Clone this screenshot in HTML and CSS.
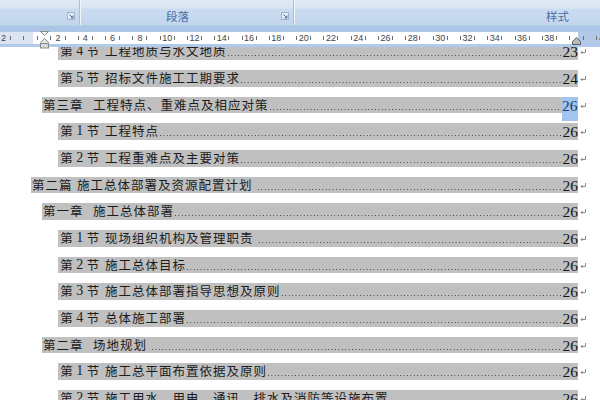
FILE: index.html
```html
<!DOCTYPE html>
<html lang="zh-CN">
<head>
<meta charset="utf-8">
<title>目录</title>
<link rel="stylesheet" href="styles.css">
</head>
<body>
<div class="app">
  <div class="ribbon">
    <div class="group g1">
      <div class="gtop"></div>
      <div class="glabel">
        <span class="launch"><svg width="8" height="8" viewBox="0 0 8 8"><rect x="0.5" y="0.5" width="7" height="7" fill="#e6eef8" stroke="#9fb2cc"/><path d="M2.5 2.5L6 6M6 3.5V6H3.5" fill="none" stroke="#56698a"/></svg></span>
      </div>
    </div>
    <div class="sep"></div>
    <div class="group g2">
      <div class="gtop"></div>
      <div class="glabel">
        <span class="lt">段落</span>
        <span class="launch"><svg width="8" height="8" viewBox="0 0 8 8"><rect x="0.5" y="0.5" width="7" height="7" fill="#e6eef8" stroke="#9fb2cc"/><path d="M2.5 2.5L6 6M6 3.5V6H3.5" fill="none" stroke="#56698a"/></svg></span>
      </div>
    </div>
    <div class="sep"></div>
    <div class="group g3">
      <div class="gtop"></div>
      <div class="glabel"><span class="lt">样式</span></div>
    </div>
  </div>
  <div class="edge"></div>
  <div class="strip"></div>
  <div class="ruler">
    <div class="scale">
      <div class="cell"><i></i><b>2</b><i></i></div>
      <div class="cell"><i></i><b></b><i></i></div>
      <div class="cell"><i></i><b>2</b><i></i></div>
      <div class="cell"><i></i><b>4</b><i></i></div>
      <div class="cell"><i></i><b>6</b><i></i></div>
      <div class="cell"><i></i><b>8</b><i></i></div>
      <div class="cell"><i></i><b>10</b><i></i></div>
      <div class="cell"><i></i><b>12</b><i></i></div>
      <div class="cell"><i></i><b>14</b><i></i></div>
      <div class="cell"><i></i><b>16</b><i></i></div>
      <div class="cell"><i></i><b>18</b><i></i></div>
      <div class="cell"><i></i><b>20</b><i></i></div>
      <div class="cell"><i></i><b>22</b><i></i></div>
      <div class="cell"><i></i><b>24</b><i></i></div>
      <div class="cell"><i></i><b>26</b><i></i></div>
      <div class="cell"><i></i><b>28</b><i></i></div>
      <div class="cell"><i></i><b>30</b><i></i></div>
      <div class="cell"><i></i><b>32</b><i></i></div>
      <div class="cell"><i></i><b>34</b><i></i></div>
      <div class="cell"><i></i><b>36</b><i></i></div>
      <div class="cell"><i></i><b>38</b><i></i></div>
      <div class="cell"><i></i><b></b><i></i></div>
      <div class="cell"><i></i><b>42</b><i></i></div>
    </div>
    <svg class="ind-left" width="10" height="18" viewBox="0 0 10 18">
      <path d="M0.5 0.5H8.5L4.5 4.5Z" fill="#f4f4f4" stroke="#8a8a8a"/>
      <path d="M4.5 7.5L8.5 11.5V12.5H0.5V11.5Z" fill="#e6e6e6" stroke="#8a8a8a"/>
      <rect x="0.5" y="12.5" width="8" height="4.5" fill="#d8d8d8" stroke="#8a8a8a"/>
    </svg>
    <svg class="ind-right" width="9" height="8" viewBox="0 0 9 8">
      <path d="M4.5 0.5L8.5 4.5V7.5H0.5V4.5Z" fill="#b9b9b9" stroke="#5f5f5f"/>
    </svg>
  </div>
  <div class="strip2"></div>
  <div class="doc">
    <div class="toc">
      <div class="row l3"><div class="hl"><span class="pre"><span class="c">第</span><span class="dg">4</span><span class="c">节</span></span><span class="ti">工程地质与水文地质</span><span class="dots"></span><span class="num">23</span></div><span class="ret"><svg width="7" height="6" viewBox="0 0 7 6"><path d="M5.5 0V3.5H1M2.5 2L1 3.5L2.5 5" fill="none" stroke="#8c8c8c"/></svg></span></div>
      <div class="row l3"><div class="hl"><span class="pre"><span class="c">第</span><span class="dg">5</span><span class="c">节</span></span><span class="ti">招标文件施工工期要求</span><span class="dots"></span><span class="num">24</span></div><span class="ret"><svg width="7" height="6" viewBox="0 0 7 6"><path d="M5.5 0V3.5H1M2.5 2L1 3.5L2.5 5" fill="none" stroke="#8c8c8c"/></svg></span></div>
      <div class="row l2"><div class="hl"><span class="pre ch">第三章</span><span class="ti">工程特点、重难点及相应对策</span><span class="dots"></span><span class="num sel">26</span></div><span class="ret"><svg width="7" height="6" viewBox="0 0 7 6"><path d="M5.5 0V3.5H1M2.5 2L1 3.5L2.5 5" fill="none" stroke="#8c8c8c"/></svg></span></div>
      <div class="row l3"><div class="hl"><span class="pre"><span class="c">第</span><span class="dg">1</span><span class="c">节</span></span><span class="ti">工程特点</span><span class="dots"></span><span class="num">26</span></div><span class="ret"><svg width="7" height="6" viewBox="0 0 7 6"><path d="M5.5 0V3.5H1M2.5 2L1 3.5L2.5 5" fill="none" stroke="#8c8c8c"/></svg></span></div>
      <div class="row l3"><div class="hl"><span class="pre"><span class="c">第</span><span class="dg">2</span><span class="c">节</span></span><span class="ti">工程重难点及主要对策</span><span class="dots"></span><span class="num">26</span></div><span class="ret"><svg width="7" height="6" viewBox="0 0 7 6"><path d="M5.5 0V3.5H1M2.5 2L1 3.5L2.5 5" fill="none" stroke="#8c8c8c"/></svg></span></div>
      <div class="row l1"><div class="hl"><span class="pre pt">第二篇</span><span class="ti sp">施工总体部署及资源配置计划</span><span class="dots"></span><span class="num">26</span></div><span class="ret"><svg width="7" height="6" viewBox="0 0 7 6"><path d="M5.5 0V3.5H1M2.5 2L1 3.5L2.5 5" fill="none" stroke="#8c8c8c"/></svg></span></div>
      <div class="row l2"><div class="hl"><span class="pre ch">第一章</span><span class="ti">施工总体部署</span><span class="dots"></span><span class="num">26</span></div><span class="ret"><svg width="7" height="6" viewBox="0 0 7 6"><path d="M5.5 0V3.5H1M2.5 2L1 3.5L2.5 5" fill="none" stroke="#8c8c8c"/></svg></span></div>
      <div class="row l3"><div class="hl"><span class="pre"><span class="c">第</span><span class="dg">1</span><span class="c">节</span></span><span class="ti sp">现场组织机构及管理职责</span><span class="dots"></span><span class="num">26</span></div><span class="ret"><svg width="7" height="6" viewBox="0 0 7 6"><path d="M5.5 0V3.5H1M2.5 2L1 3.5L2.5 5" fill="none" stroke="#8c8c8c"/></svg></span></div>
      <div class="row l3"><div class="hl"><span class="pre"><span class="c">第</span><span class="dg">2</span><span class="c">节</span></span><span class="ti">施工总体目标</span><span class="dots"></span><span class="num">26</span></div><span class="ret"><svg width="7" height="6" viewBox="0 0 7 6"><path d="M5.5 0V3.5H1M2.5 2L1 3.5L2.5 5" fill="none" stroke="#8c8c8c"/></svg></span></div>
      <div class="row l3"><div class="hl"><span class="pre"><span class="c">第</span><span class="dg">3</span><span class="c">节</span></span><span class="ti">施工总体部署指导思想及原则</span><span class="dots"></span><span class="num">26</span></div><span class="ret"><svg width="7" height="6" viewBox="0 0 7 6"><path d="M5.5 0V3.5H1M2.5 2L1 3.5L2.5 5" fill="none" stroke="#8c8c8c"/></svg></span></div>
      <div class="row l3"><div class="hl"><span class="pre"><span class="c">第</span><span class="dg">4</span><span class="c">节</span></span><span class="ti">总体施工部署</span><span class="dots"></span><span class="num">26</span></div><span class="ret"><svg width="7" height="6" viewBox="0 0 7 6"><path d="M5.5 0V3.5H1M2.5 2L1 3.5L2.5 5" fill="none" stroke="#8c8c8c"/></svg></span></div>
      <div class="row l2"><div class="hl"><span class="pre ch">第二章</span><span class="ti sp">场地规划</span><span class="dots"></span><span class="num">26</span></div><span class="ret"><svg width="7" height="6" viewBox="0 0 7 6"><path d="M5.5 0V3.5H1M2.5 2L1 3.5L2.5 5" fill="none" stroke="#8c8c8c"/></svg></span></div>
      <div class="row l3"><div class="hl"><span class="pre"><span class="c">第</span><span class="dg">1</span><span class="c">节</span></span><span class="ti">施工总平面布置依据及原则</span><span class="dots"></span><span class="num">26</span></div><span class="ret"><svg width="7" height="6" viewBox="0 0 7 6"><path d="M5.5 0V3.5H1M2.5 2L1 3.5L2.5 5" fill="none" stroke="#8c8c8c"/></svg></span></div>
      <div class="row l3"><div class="hl"><span class="pre"><span class="c">第</span><span class="dg">2</span><span class="c">节</span></span><span class="ti">施工用水、用电、通讯、排水及消防等设施布置</span><span class="dots"></span><span class="num">26</span></div><span class="ret"><svg width="7" height="6" viewBox="0 0 7 6"><path d="M5.5 0V3.5H1M2.5 2L1 3.5L2.5 5" fill="none" stroke="#8c8c8c"/></svg></span></div>
    </div>
  </div>
</div>
</body>
</html>
```

FILE: styles.css
```css
* { box-sizing: border-box; margin: 0; padding: 0; }
html, body { width: 600px; height: 400px; overflow: hidden; background: #fff; }
body { font-family: "Noto Sans CJK SC", sans-serif; }

.app { width: 600px; height: 400px; display: flex; flex-direction: column; }

/* ribbon */
.ribbon {
  display: flex;
  height: 25px;
  background: linear-gradient(#dfe9f6 0, #dbe6f4 8px, #cadcf1 9px, #c3d6ee 25px);
}
.group { display: flex; flex-direction: column; }
.g1 { width: 79px; }
.g2 { width: 212px; }
.g3 { flex: 1; }
.gtop { height: 8px; }
.glabel { flex: 1; display: flex; align-items: center; }
.lt {
  font-size: 11.5px;
  line-height: 17px;
  color: #4a6ea6;
}
.g2 .lt { margin-left: 85px; }
.g3 .lt { margin-left: 251px; }
.launch { margin-left: auto; margin-right: 4px; display: flex; margin-top: -1px; }
.sep {
  width: 2px;
  background: linear-gradient(to right, #a9bfdc 0 1px, #f1f6fc 1px);
}
.edge { height: 1px; background: #a8d5de; }
.strip { height: 6px; background: #adc6e7; }
.strip2 { height: 3px; background: #b2cae9; position: relative; z-index: 2; }

/* ruler */
.ruler {
  position: relative;
  height: 12px;
  background: linear-gradient(to right, #dbe5f2 0 33px, #fff 33px 578px, #b2c9e8 578px);
  z-index: 3;
}
.scale { display: flex; margin-left: -10.25px; height: 12px; }
.cell {
  flex: 0 0 27.3px;
  display: flex;
  align-items: center;
  padding: 0 6.15px;
}
.cell i { flex: 0 0 1px; height: 4px; background: #6f6f6f; }
.cell b {
  flex: 1;
  text-align: center;
  font-weight: normal;
  font-family: "Liberation Sans", Arial, sans-serif;
  font-size: 9px;
  line-height: 12px;
  color: #444;
}
.ind-left { position: absolute; left: 40px; top: -1px; }
.ind-right { position: absolute; left: 572px; top: 5px; }

/* document */
.doc { flex: 1; overflow: hidden; background: #fff; }
.toc { margin-top: -3.7px; }
.row { height: 26.667px; display: flex; align-items: flex-start; }
.hl {
  flex: 1;
  display: flex;
  align-items: flex-start;
  height: 16.7px;
  background: #c0c0c0;
  font-size: 12.5px;
  letter-spacing: 1px;
  line-height: 16.7px;
  color: #1c1c1c;
  white-space: nowrap;
}
.l1 .hl { margin-left: 31px; }
.l2 .hl { margin-left: 42px; }
.l3 .hl { margin-left: 58.3px; }
.ret { flex: 0 0 22px; padding-left: 1.5px; padding-top: 6px; display: flex; }

.pre { display: inline-flex; flex: 0 0 auto; padding-left: 1.5px; width: 46.7px; }
.pre .c { display: inline-block; width: 13.5px; letter-spacing: 0; text-align: center; }
.pre .dg {
  display: inline-block;
  width: 13px;
  text-align: center;
  letter-spacing: 0;
  font-family: "Liberation Serif", "Times New Roman", serif;
  font-size: 14px;
}
.pre.ch { width: 51px; padding-left: 1px; }
.pre.pt { width: 46px; padding-left: 1px; }

.ti { flex: 0 0 auto; }
.ti.sp { padding-right: 4px; }
.dots {
  flex: 1;
  align-self: stretch;
  margin: 0 1px 0 1px;
  background-image: linear-gradient(to right, #3c3c3c 0 1.1px, transparent 1.1px);
  background-size: 3.4px 1.2px;
  background-repeat: repeat-x;
  background-position: 0 12px;
}
.num {
  flex: 0 0 auto;
  font-family: "Liberation Serif", "Times New Roman", serif;
  font-size: 15.5px;
  letter-spacing: 0;
  line-height: 17px;
  color: #151515;
}
.num.sel {
  height: 24px;
  background: #a2c4ee;
  color: #1f3a68;
  padding: 0 0.5px;
}
```
